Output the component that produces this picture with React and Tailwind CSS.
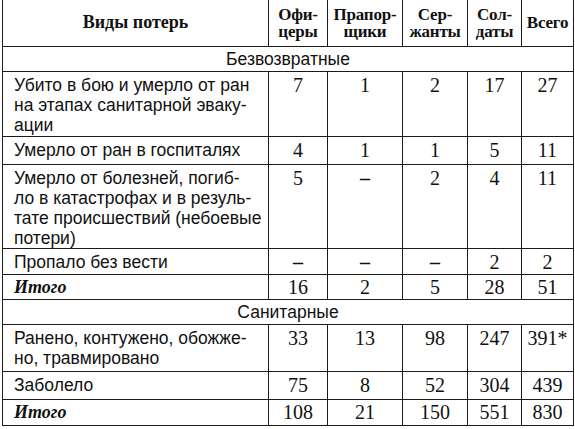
const sans = { fontFamily: '"Liberation Sans", Arial, sans-serif' };

const head = ["Офи-\nцеры", "Прапор-\nщики", "Сер-\nжанты", "Сол-\nдаты", "Всего"];

const rows = [
  { section: "Безвозвратные", h: "h-[25px]" },
  { label: "Убито в бою и умерло от ран\nна этапах санитарной эваку-\nации", nums: ["7", "1", "2", "17", "27"], h: "h-[65px]" },
  { label: "Умерло от ран в госпиталях", nums: ["4", "1", "1", "5", "11"], h: "h-[28px]" },
  { label: "Умерло от болезней, погиб-\nло в катастрофах и в резуль-\nтате происшествий (небоевые\nпотери)", nums: ["5", "–", "2", "4", "11"], h: "h-[84px]" },
  { label: "Пропало без вести", nums: ["–", "–", "–", "2", "2"], h: "h-[26px]" },
  { total: true, label: "Итого", nums: ["16", "2", "5", "28", "51"], h: "h-[25px]" },
  { section: "Санитарные", h: "h-[25px]" },
  { label: "Ранено, контужено, обожже-\nно, травмировано", nums: ["33", "13", "98", "247", "391*"], h: "h-[47px]" },
  { label: "Заболело", nums: ["75", "8", "52", "304", "439"], h: "h-[28px]" },
  { total: true, label: "Итого", nums: ["108", "21", "150", "551", "830"], h: "h-[26px]" },
];

export default function App() {
  return (
    <div className="w-[575px] h-[429px] bg-white pl-[2px] overflow-hidden font-['Liberation_Serif',serif] text-[#111]">
      <table className="table-fixed border-collapse w-[571px]">
        <colgroup>
          <col className="w-[266px]" />
          <col className="w-[59px]" />
          <col className="w-[75px]" />
          <col className="w-[65px]" />
          <col className="w-[54px]" />
          <col className="w-[52px]" />
        </colgroup>
        <thead>
          <tr className="h-[46px]">
            <th className="border border-t-0 border-[#1a1a1a] text-[18px] font-bold align-middle">Виды потерь</th>
            {head.map((h, i) => (
              <th key={i} className="border border-t-0 border-[#1a1a1a] text-[17px] leading-[17px] tracking-[-0.2px] font-bold align-middle whitespace-pre-line">
                {h}
              </th>
            ))}
          </tr>
        </thead>
        <tbody>
          {rows.map((r, i) => {
            if (r.section) {
              return (
                <tr key={i} className={r.h}>
                  <td colSpan={6} style={sans} className="border border-[#1a1a1a] text-center text-[17.5px] leading-[20px] align-middle">
                    {r.section}
                  </td>
                </tr>
              );
            }
            return (
              <tr key={i} className={r.h}>
                {r.total ? (
                  <td className="border border-[#1a1a1a] pl-[11px] align-middle text-[18px] font-bold italic leading-[20px]">
                    {r.label}
                  </td>
                ) : (
                  <td style={sans} className="border border-[#1a1a1a] pl-[11px] pt-[3px] align-top text-[17.5px] leading-[20px] whitespace-pre">
                    {r.label}
                  </td>
                )}
                {r.nums.map((n, j) => (
                  <td key={j} className={"border border-[#1a1a1a] text-center text-[20px] leading-[20px] " + (r.total ? "align-middle" : "align-top pt-[3px]")}>
                    {n === "–" ? <span className="font-bold">–</span> : n}
                  </td>
                ))}
              </tr>
            );
          })}
        </tbody>
      </table>
    </div>
  );
}
